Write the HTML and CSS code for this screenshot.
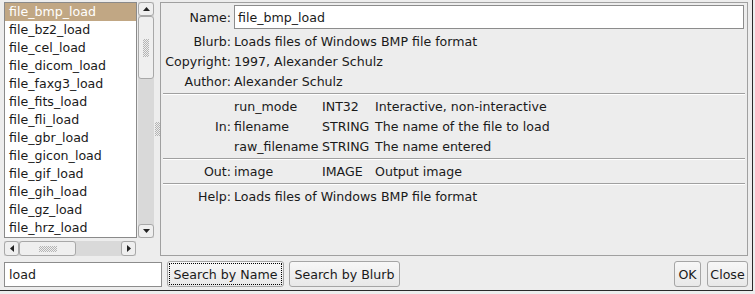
FILE: index.html
```html
<!DOCTYPE html>
<html lang="en">
<head>
    <meta charset="UTF-8">
    <title>Procedure Browser</title>
    <link rel="stylesheet" href="styles.css">
</head>
<body>

    <div class="dialog">
        <div class="main">
            <div class="browser">
                <div class="list-wrap">
                    <ul class="proc-list">
                        <li class="selected">file_bmp_load</li>
                        <li>file_bz2_load</li>
                        <li>file_cel_load</li>
                        <li>file_dicom_load</li>
                        <li>file_faxg3_load</li>
                        <li>file_fits_load</li>
                        <li>file_fli_load</li>
                        <li>file_gbr_load</li>
                        <li>file_gicon_load</li>
                        <li>file_gif_load</li>
                        <li>file_gih_load</li>
                        <li>file_gz_load</li>
                        <li>file_hrz_load</li>
                    </ul>
                    <div class="vscroll">
                        <div class="sb-btn v-btn">
                            <svg width="7" height="4" viewBox="0 0 7 4"><path d="M0 4 L3.5 0 L7 4 Z" fill="#222"/></svg>
                        </div>
                        <div class="sb-thumb v-thumb"><span class="grip v-grip"></span></div>
                        <div class="sb-trough"></div>
                        <div class="sb-btn v-btn">
                            <svg width="7" height="4" viewBox="0 0 7 4"><path d="M0 0 L7 0 L3.5 4 Z" fill="#222"/></svg>
                        </div>
                    </div>
                </div>
                <div class="hscroll">
                    <div class="sb-btn h-btn">
                        <svg width="4" height="7" viewBox="0 0 4 7"><path d="M4 0 L4 7 L0 3.5 Z" fill="#222"/></svg>
                    </div>
                    <div class="sb-thumb h-thumb"><span class="grip h-grip"></span></div>
                    <div class="sb-trough"></div>
                    <div class="sb-btn h-btn">
                        <svg width="4" height="7" viewBox="0 0 4 7"><path d="M0 0 L4 3.5 L0 7 Z" fill="#222"/></svg>
                    </div>
                </div>
            </div>

            <div class="pane-handle"><span class="grip handle-grip"></span></div>

            <div class="info-frame">
                <div class="info-grid">
                    <div class="label name-label">Name:</div>
                    <div class="name-entry">file_bmp_load</div>

                    <div class="label">Blurb:</div>
                    <div class="value wide">Loads files of Windows BMP file format</div>
                    <div class="label">Copyright:</div>
                    <div class="value wide">1997, Alexander Schulz</div>
                    <div class="label">Author:</div>
                    <div class="value wide">Alexander Schulz</div>

                    <div class="separator"></div>

                    <div class="label"></div>
                    <div class="value">run_mode</div>
                    <div class="value">INT32</div>
                    <div class="value">Interactive, non-interactive</div>
                    <div class="label">In:</div>
                    <div class="value">filename</div>
                    <div class="value">STRING</div>
                    <div class="value">The name of the file to load</div>
                    <div class="label"></div>
                    <div class="value">raw_filename</div>
                    <div class="value">STRING</div>
                    <div class="value">The name entered</div>

                    <div class="separator"></div>

                    <div class="label">Out:</div>
                    <div class="value">image</div>
                    <div class="value">IMAGE</div>
                    <div class="value">Output image</div>

                    <div class="separator"></div>

                    <div class="label">Help:</div>
                    <div class="value wide">Loads files of Windows BMP file format</div>
                </div>
            </div>
        </div>

        <div class="actions">
            <div class="search-entry">load</div>
            <button class="btn btn-name focused">Search by Name</button>
            <button class="btn btn-blurb">Search by Blurb</button>
            <div class="spacer"></div>
            <button class="btn btn-ok">OK</button>
            <button class="btn btn-close">Close</button>
        </div>
    </div>

</body>
</html>
```

FILE: styles.css
```css
body {
    margin: 0;
    font-family: 'DejaVu Sans', sans-serif;
    font-size: 12.6px;
    background: #ededed;
    color: #1a1a1a;
}

.dialog {
    width: 752px;
    height: 290px;
    border-right: 1px solid #2a2a2a;
    border-bottom: 1px solid #2a2a2a;
    display: flex;
    flex-direction: column;
}

.main {
    display: flex;
    padding: 2px 0 0 4px;
    height: 254px;
}

/* left side: procedure list */

.browser {
    width: 150px;
    display: flex;
    flex-direction: column;
}

.list-wrap {
    display: flex;
    height: 236px;
}

.proc-list {
    list-style: none;
    margin: 0;
    padding: 0;
    width: 131px;
    border: 1px solid #8a8a8a;
    background: #fff;
    overflow: hidden;
}

.proc-list li {
    height: 18px;
    line-height: 18px;
    padding-left: 4px;
    white-space: nowrap;
}

.proc-list li.selected {
    background: #c1a784;
    color: #fff;
}

.vscroll {
    width: 16px;
    margin-left: 1px;
    display: flex;
    flex-direction: column;
    background: #d9d9d9;
}

.hscroll {
    width: 132px;
    height: 15px;
    margin-top: 3px;
    display: flex;
    background: #d9d9d9;
}

.sb-btn, .sb-thumb {
    background: #efefef;
    border: 1px solid #a8a8a8;
    border-radius: 3px;
    box-sizing: border-box;
    display: flex;
    align-items: center;
    justify-content: center;
}

.v-btn {
    height: 14px;
}

.v-thumb {
    height: 63px;
}

.h-btn {
    width: 15px;
}

.h-thumb {
    width: 57px;
}

.sb-trough {
    flex: 1;
}

.grip {
    display: block;
    background: repeating-conic-gradient(#b4b4b4 0 25%, transparent 0 50%) 0 0 / 2px 2px;
}

.v-grip {
    width: 6px;
    height: 18px;
}

.h-grip {
    width: 18px;
    height: 6px;
}

.pane-handle {
    width: 6px;
    display: flex;
    align-items: center;
    justify-content: center;
}

.handle-grip {
    width: 5px;
    height: 14px;
}

/* right side: procedure info */

.info-frame {
    width: 586px;
    border: 1px solid #a0a0a0;
    padding-top: 2px;
}

.info-grid {
    display: grid;
    grid-template-columns: 73px 88px 53px 1fr;
}

.label {
    grid-column: 1;
    text-align: right;
    padding-right: 3px;
    height: 20px;
    line-height: 22px;
    white-space: nowrap;
}

.value {
    height: 20px;
    line-height: 22px;
    white-space: nowrap;
}

.value.wide {
    grid-column: 2 / -1;
}

.name-label {
    height: 24px;
    line-height: 25px;
    margin-bottom: 2px;
}

.name-entry {
    grid-column: 2 / -1;
    height: 24px;
    line-height: 23px;
    margin-right: 3px;
    padding-left: 3px;
    box-sizing: border-box;
    border: 1px solid #8c8c8c;
    background: #fff;
}

.separator {
    grid-column: 1 / -1;
    margin: 2px 2px 1px;
    border-top: 1px solid #a0a0a0;
    border-bottom: 1px solid #fff;
}

/* bottom buttons */

.actions {
    display: flex;
    align-items: center;
    padding: 5px 4px 0 4px;
    gap: 5px;
}

.search-entry {
    width: 158px;
    height: 25px;
    line-height: 24px;
    box-sizing: border-box;
    border: 1px solid #8c8c8c;
    background: #fff;
    padding-left: 4px;
}

.spacer {
    flex: 1;
}

.btn {
    font-family: inherit;
    font-size: 12.6px;
    color: #1a1a1a;
    height: 26px;
    padding: 0;
    text-align: center;
    border: 1px solid #a5a5a5;
    border-radius: 3px;
    background: linear-gradient(#f7f7f7, #e8e8e8);
}

.btn.focused {
    outline: 1px dotted #000;
    outline-offset: -3px;
}

.btn-name {
    width: 117px;
}

.btn-blurb {
    width: 111px;
}

.btn-ok {
    width: 27px;
}

.btn-close {
    width: 41px;
    margin-left: 1px;
}
```
